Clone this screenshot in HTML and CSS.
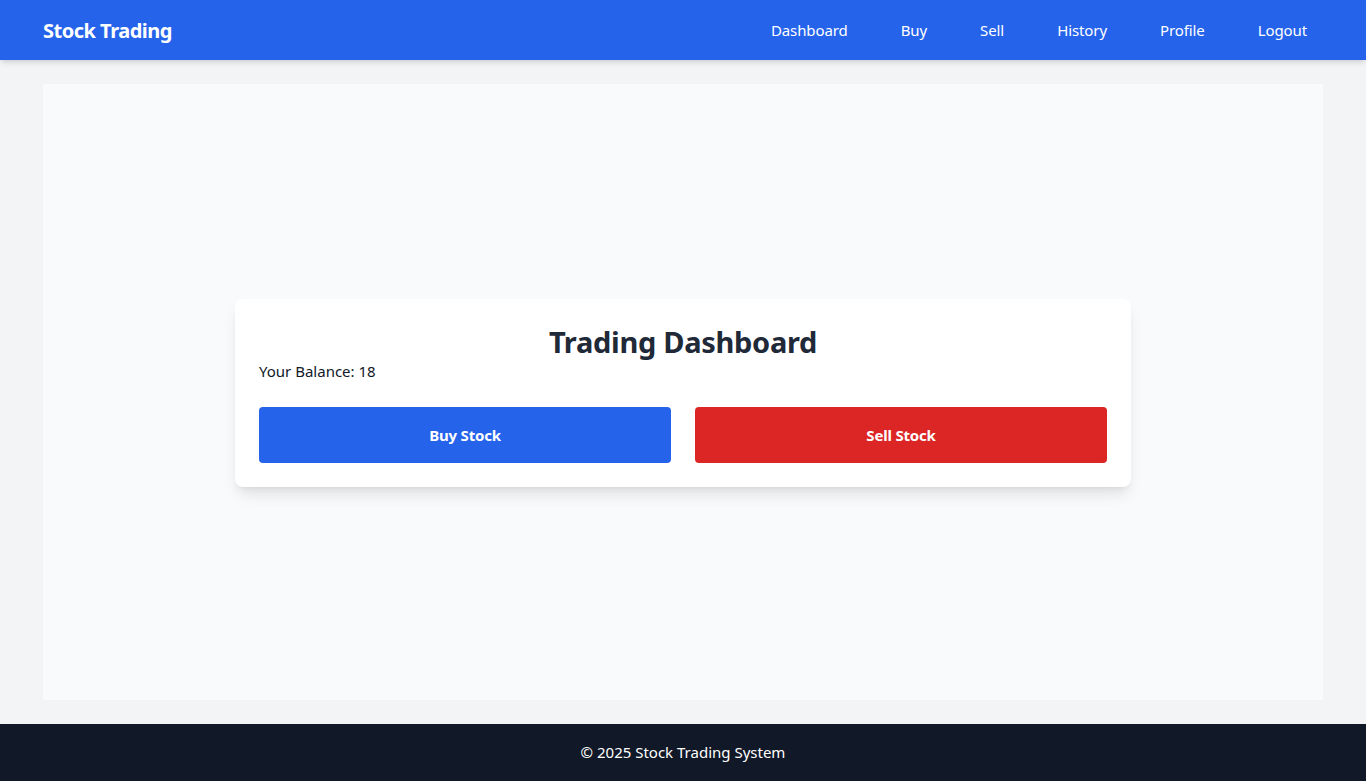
FILE: index.html
```html
<!DOCTYPE html>
<html lang="en">
<head>
<meta charset="utf-8">
<title>Stock Trading</title>
<link rel="stylesheet" href="styles.css">
</head>
<body>
<div class="page">
  <header class="topbar">
    <div class="topbar-inner">
      <a class="brand" href="#">Stock Trading</a>
      <nav class="nav">
        <a href="#">Dashboard</a>
        <a href="#">Buy</a>
        <a href="#">Sell</a>
        <a href="#">History</a>
        <a href="#">Profile</a>
        <a href="#">Logout</a>
      </nav>
    </div>
  </header>
  <main class="main">
    <div class="content">
      <section class="card">
        <h1 class="card-title">Trading Dashboard</h1>
        <p class="balance">Your Balance: 18</p>
        <div class="actions">
          <button class="btn btn-buy">Buy Stock</button>
          <button class="btn btn-sell">Sell Stock</button>
        </div>
      </section>
    </div>
  </main>
  <footer class="footer">© 2025 Stock Trading System</footer>
</div>
</body>
</html>
```

FILE: styles.css
```css
* { box-sizing: border-box; }
html, body { margin: 0; padding: 0; }
body {
  font-family: "Noto Sans", "Open Sans", "DejaVu Sans", sans-serif;
  font-size: 16px;
  line-height: 24px;
  background: #f3f4f6;
  color: #111827;
}
.page {
  min-height: 100vh;
  display: flex;
  flex-direction: column;
}
.topbar {
  background: #2563eb;
  height: 60px;
  box-shadow: 0 4px 6px -1px rgba(0,0,0,0.1), 0 2px 4px -2px rgba(0,0,0,0.1);
  position: relative;
  z-index: 1;
}
.topbar-inner {
  max-width: 1280px;
  margin: 0 auto;
  height: 100%;
  display: flex;
  align-items: center;
  justify-content: space-between;
}
.brand {
  color: #fff;
  text-decoration: none;
  font-weight: 700;
  font-size: 20px;
  line-height: 28px;
  letter-spacing: -0.5px;
  padding-top: 2px;
}
.nav {
  display: flex;
  gap: 21px;
}
.nav a {
  color: #fff;
  text-decoration: none;
  padding: 0 16px;
  font-size: 15px;
  letter-spacing: -0.1px;
}
.main {
  flex: 1;
  padding: 24px 0;
  display: flex;
}
.content {
  flex: 1;
  max-width: 1280px;
  margin: 0 auto;
  background: #f9fafb;
  display: flex;
  align-items: center;
  justify-content: center;
  padding-top: 1px;
}
.card {
  width: 896px;
  background: #fff;
  border-radius: 8px;
  padding: 24px;
  box-shadow: 0 10px 15px -3px rgba(0,0,0,0.1), 0 4px 6px -4px rgba(0,0,0,0.1);
}
.card-title {
  margin: 0;
  text-align: center;
  font-size: 29px;
  line-height: 36px;
  padding-top: 1px;
  margin-bottom: -1px;
  font-weight: 700;
  color: #1f2937;
  letter-spacing: -0.3px;
}
.balance {
  margin: 0;
  font-size: 15px;
  line-height: 24px;
  color: #111827;
}
.actions {
  margin-top: 24px;
  display: grid;
  grid-template-columns: 1fr 1fr;
  gap: 24px;
}
.btn {
  border: 0;
  border-radius: 4px;
  height: 56px;
  color: #fff;
  font-family: inherit;
  font-weight: 700;
  font-size: 15px;
  letter-spacing: -0.2px;
  cursor: pointer;
}
.btn-buy { background: #2563eb; }
.btn-sell { background: #dc2626; }
.footer {
  background: #111827;
  color: #fff;
  text-align: center;
  padding: 16px 0;
  height: 57px;
  font-size: 15px;
  line-height: 24px;
}
```
